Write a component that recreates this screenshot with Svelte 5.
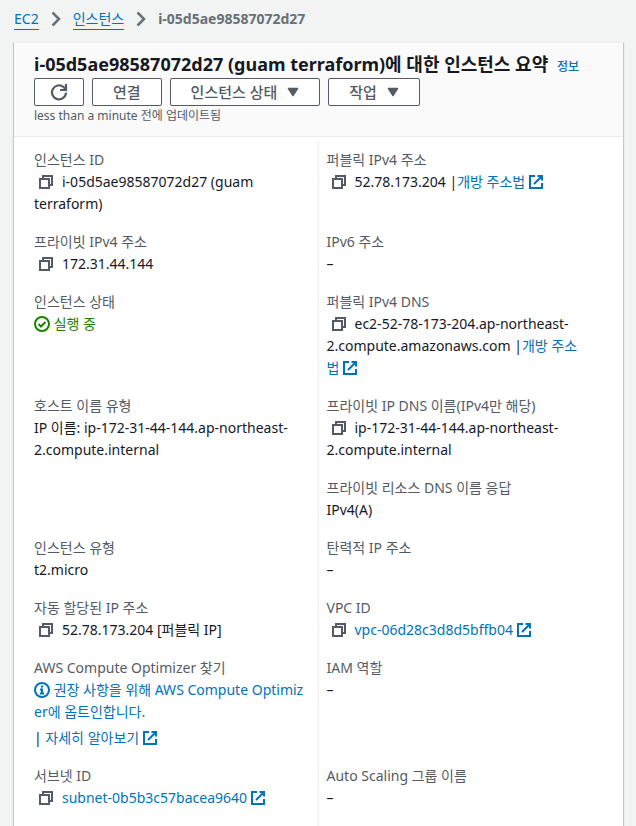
<script>
  const instanceId = 'i-05d5ae98587072d27';

  // each entry is one row: left cell, right cell; a cell can stack several fields
  const rows = [
    [
      [{ label: '인스턴스 ID', copy: true, text: `${instanceId} (guam terraform)` }],
      [{ label: '퍼블릭 IPv4 주소', copy: true, text: '52.78.173.204 |', link: '개방 주소법' }]
    ],
    [
      [{ label: '프라이빗 IPv4 주소', copy: true, text: '172.31.44.144' }],
      [{ label: 'IPv6 주소', text: '–' }]
    ],
    [
      [{ label: '인스턴스 상태', status: '실행 중' }],
      [{
        label: '퍼블릭 IPv4 DNS',
        copy: true,
        text: 'ec2-52-78-173-204.ap-northeast-2.compute.amazonaws.com |',
        link: '개방 주소법'
      }]
    ],
    [
      [{ label: '호스트 이름 유형', text: 'IP 이름: ip-172-31-44-144.ap-northeast-2.compute.internal' }],
      [
        { label: '프라이빗 IP DNS 이름(IPv4만 해당)', copy: true, text: 'ip-172-31-44-144.ap-northeast-2.compute.internal' },
        { label: '프라이빗 리소스 DNS 이름 응답', text: 'IPv4(A)' }
      ]
    ],
    [
      [{ label: '인스턴스 유형', text: 't2.micro' }],
      [{ label: '탄력적 IP 주소', text: '–' }]
    ],
    [
      [{ label: '자동 할당된 IP 주소', copy: true, text: '52.78.173.204 [퍼블릭 IP]' }],
      [{ label: 'VPC ID', copy: true, link: 'vpc-06d28c3d8d5bffb04' }]
    ],
    [
      [{
        label: 'AWS Compute Optimizer 찾기',
        optIn: '권장 사항을 위해 AWS Compute Optimizer에 옵트인합니다.',
        more: '자세히 알아보기'
      }],
      [{ label: 'IAM 역할', text: '–' }]
    ],
    [
      [{ label: '서브넷 ID', copy: true, link: 'subnet-0b5b3c57bacea9640' }],
      [{ label: 'Auto Scaling 그룹 이름', text: '–' }]
    ]
  ];

  function copyValue(field) {
    navigator.clipboard?.writeText((field.text || field.link).replace(' |', ''));
  }
</script>

{#snippet chevron()}
  <svg class="chevron" width="10" height="16" viewBox="0 0 10 16" fill="none" aria-hidden="true">
    <path d="M1.5 1.5L8 8l-6.500 6.500" stroke="currentColor" stroke-width="2.500" />
  </svg>
{/snippet}

{#snippet caret()}
  <svg width="12" height="10" viewBox="0 0 12 10" aria-hidden="true">
    <path d="M1.5 1.5h9L6 8.5z" fill="currentColor" stroke="currentColor" stroke-width="1.5" stroke-linejoin="round" />
  </svg>
{/snippet}

{#snippet external()}
  <svg class="icon" width="14" height="14" viewBox="0 0 14 14" fill="none" aria-hidden="true">
    <path d="M6 1H1v12h12V8M8.5 1H13v4.5M13 1L5 9" stroke="currentColor" stroke-width="2" />
  </svg>
{/snippet}

<nav class="breadcrumbs" aria-label="breadcrumb">
  <a href="#ec2">EC2</a>
  {@render chevron()}
  <a href="#instances">인스턴스</a>
  {@render chevron()}
  <span class="current">{instanceId}</span>
</nav>

<main class="panel">
  <header class="panel-header">
    <h1>{instanceId} (guam terraform)에 대한 인스턴스 요약 <a class="info" href="#info">정보</a></h1>
    <div class="actions">
      <button class="btn btn-icon" aria-label="새로 고침">
        <svg width="18" height="18" viewBox="0 0 18 18" fill="none" aria-hidden="true">
          <path d="M16 9.500a7 7 0 1 1-2.500-5.500L16 6.500M16 1v6h-6" stroke="currentColor" stroke-width="2.200" />
        </svg>
      </button>
      <button class="btn">연결</button>
      <button class="btn" aria-haspopup="menu">인스턴스 상태 {@render caret()}</button>
      <button class="btn" aria-haspopup="menu">작업 {@render caret()}</button>
    </div>
    <p class="updated">less than a minute 전에 업데이트됨</p>
  </header>

  <div class="details">
    {#each rows as row}
      {#each row as cell}
        <dl class="cell">
          {#each cell as field}
            <div class="field">
              <dt>{field.label}</dt>
              <dd>
                {#if field.copy}
                  <button class="copy" aria-label="{field.label} 복사" onclick={() => copyValue(field)}>
                    <svg class="icon" width="14" height="14" viewBox="0 0 14 14" fill="none" aria-hidden="true">
                      <path d="M1 4h9v9H1zM4 4V1h9v9h-3" stroke="currentColor" stroke-width="2" />
                    </svg>
                  </button>
                {/if}{#if field.text}{field.text}{/if}{#if field.link}<a href="#detail">{field.link} {@render external()}</a>{/if}
                {#if field.status}
                  <span class="status">
                    <svg class="icon" width="16" height="16" viewBox="0 0 16 16" fill="none" aria-hidden="true">
                      <circle cx="8" cy="8" r="7" stroke="currentColor" stroke-width="2" />
                      <path d="M4.5 8L7 10.5 11.5 6" stroke="currentColor" stroke-width="2" />
                    </svg>
                    {field.status}
                  </span>
                {/if}
                {#if field.optIn}
                  <a class="opt-in" href="#optimizer">
                    <svg class="icon" width="16" height="16" viewBox="0 0 16 16" fill="none" aria-hidden="true">
                      <circle cx="8" cy="8" r="7" stroke="currentColor" stroke-width="2" />
                      <path d="M7 4.500h2M6 7.500h2V12M6 11.500h4" stroke="currentColor" stroke-width="2" />
                    </svg>
                    {field.optIn}
                  </a>
                  <div class="more">| <a href="#more">{field.more} {@render external()}</a></div>
                {/if}
              </dd>
            </div>
          {/each}
        </dl>
      {/each}
    {/each}
  </div>
</main>

<style>
  :global(body) {
    background: #f2f3f3;
    color: #16191f;
    font-family: 'Noto Sans', 'Noto Sans CJK KR', sans-serif;
    font-size: 14px;
    line-height: 22px;
  }

  a {
    color: #0073bb;
    text-decoration: none;
  }

  .breadcrumbs {
    display: flex;
    align-items: center;
    gap: 12px;
    padding: 8px 14px 12px;
  }

  .breadcrumbs a {
    height: 20px;
    line-height: 20px;
    border-bottom: 1px solid #0073bb;
  }

  .chevron {
    color: #687078;
  }

  .current {
    color: #687078;
    font-weight: 700;
  }

  .panel {
    margin: 0 13px 20px 14px;
    background: #fff;
    border-top: 1px solid #eaeded;
    box-shadow:
      0 1px 1px 0 rgba(0, 28, 36, 0.3),
      1px 1px 1px 0 rgba(0, 28, 36, 0.15),
      -1px 1px 1px 0 rgba(0, 28, 36, 0.15);
  }

  .panel-header {
    padding: 10px 20px;
    background: #fafafa;
    border-bottom: 1px solid #eaeded;
  }

  h1 {
    margin: 0;
    font-size: 18px;
    line-height: 23px;
    font-weight: 700;
  }

  .info {
    margin-left: 4px;
    font-size: 12px;
    font-weight: 500;
  }

  .actions {
    display: flex;
    flex-wrap: wrap;
    gap: 8px;
  }

  .btn {
    display: flex;
    align-items: center;
    justify-content: center;
    gap: 10px;
    height: 28px;
    padding: 0 20px;
    font: inherit;
    font-size: 15px;
    font-weight: 500;
    color: #545b64;
    background: #fff;
    border: 1px solid #545b64;
    border-radius: 2px;
    cursor: pointer;
  }

  .btn:hover {
    background: #fafafa;
    color: #16191f;
  }

  .btn-icon {
    padding: 0 15px;
  }

  .updated {
    margin: 0;
    font-size: 12px;
    line-height: 20px;
    color: #545b64;
  }

  .details {
    display: grid;
    grid-template-columns: 1fr 1fr;
    padding: 4px 22px 0 20px;
  }

  .cell {
    margin: 0;
    padding: 8px 8px 8px 0;
  }

  .cell:nth-child(even) {
    padding: 8px 22px 8px 8px;
    border-left: 1px solid #eaeded;
  }

  .cell:nth-last-child(-n + 2) {
    padding-bottom: 20px;
  }

  .field + .field {
    margin-top: 16px;
  }

  dt {
    color: #545b64;
  }

  dd {
    margin: 0;
  }

  .icon {
    vertical-align: -2px;
  }

  .copy {
    width: 28px;
    height: 16px;
    padding: 0 9px 0 5px;
    font: inherit;
    line-height: 16px;
    color: #545b64;
    background: none;
    border: 0;
    cursor: pointer;
  }

  .status {
    color: #1d8102;
  }

  .status .icon,
  .opt-in .icon {
    vertical-align: -3px;
  }

  .opt-in {
    word-break: break-all;
  }

  .more {
    margin-top: 4px;
  }
</style>
